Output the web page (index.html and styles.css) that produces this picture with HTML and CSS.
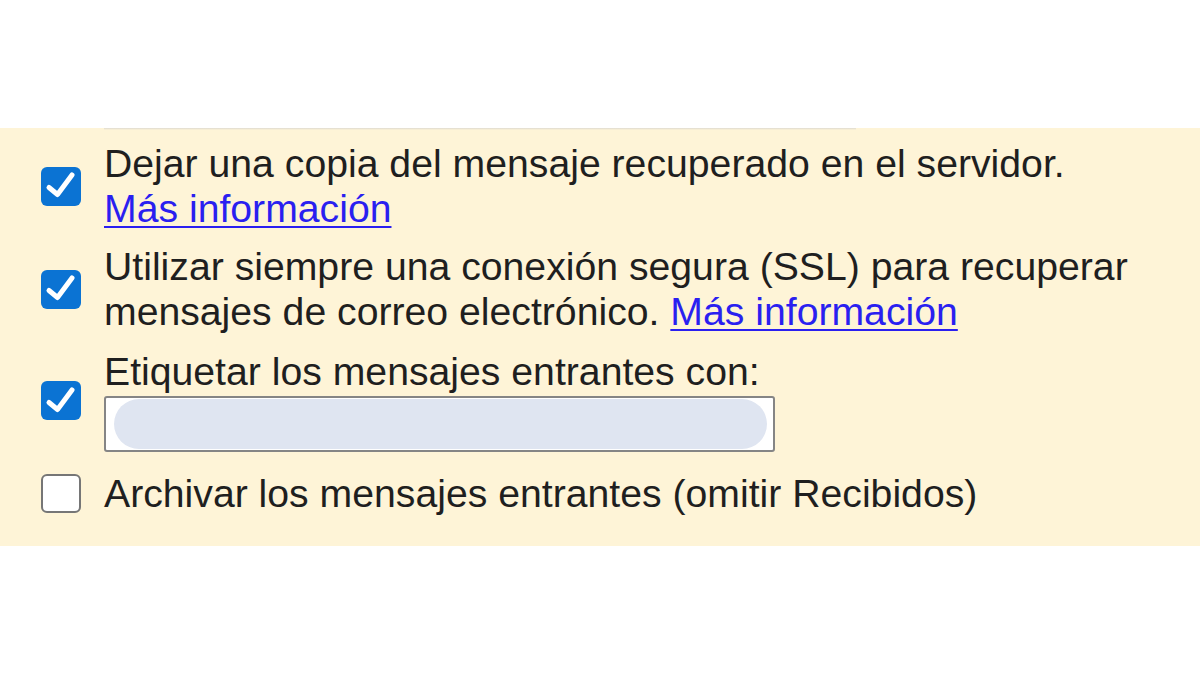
FILE: index.html
```html
<!DOCTYPE html>
<html lang="es">
<head>
<meta charset="utf-8">
<title>Opciones</title>
<link rel="stylesheet" href="styles.css">
</head>
<body>
<div class="page">
  <section class="band">
    <div class="edge"></div>
    <div class="row row-first">
      <span class="cb checked"><svg viewBox="0 0 40 40" width="40" height="40"><path d="M8 21.5 L16.5 28.5 L31 9" fill="none" stroke="#fff" stroke-width="5" stroke-linecap="round" stroke-linejoin="round"/></svg></span>
      <div class="label">Dejar una copia del mensaje recuperado en el servidor.<br><a href="#">Más información</a></div>
    </div>
    <div class="row row-second">
      <span class="cb checked"><svg viewBox="0 0 40 40" width="40" height="40"><path d="M8 21.5 L16.5 28.5 L31 9" fill="none" stroke="#fff" stroke-width="5" stroke-linecap="round" stroke-linejoin="round"/></svg></span>
      <div class="label">Utilizar siempre una conexión segura (SSL) para recuperar<br>mensajes de correo electrónico. <a href="#">Más información</a></div>
    </div>
    <div class="row row-third">
      <span class="cb checked"><svg viewBox="0 0 40 40" width="40" height="40"><path d="M8 21.5 L16.5 28.5 L31 9" fill="none" stroke="#fff" stroke-width="5" stroke-linecap="round" stroke-linejoin="round"/></svg></span>
      <div class="label">Etiquetar los mensajes entrantes con:
        <div class="field"><div class="pill"></div></div>
      </div>
    </div>
    <div class="row row-fourth">
      <span class="cb"></span>
      <div class="label">Archivar los mensajes entrantes (omitir Recibidos)</div>
    </div>
  </section>
</div>
</body>
</html>
```

FILE: styles.css
```css
html, body {
  margin: 0;
  padding: 0;
  background: #ffffff;
}
.page {
  width: 1200px;
  height: 675px;
  padding-top: 128px;
  box-sizing: border-box;
}
.band {
  position: relative;
  background: #fef4d7;
  padding: 13px 0 30px 41px;
  font-family: "Liberation Sans", Arial, sans-serif;
  font-size: 39.2px;
  line-height: 45px;
  color: #1f1f1f;
}
.edge {
  position: absolute;
  top: 0;
  left: 104px;
  width: 752px;
  height: 2px;
  background: linear-gradient(to bottom, #dedad0, rgba(222,218,208,0));
}
.row {
  display: flex;
  align-items: center;
  gap: 23px;
}
.row-second { margin-top: 13px; }
.row-third { margin-top: 15px; }
.row-fourth { margin-top: 19px; }
.cb {
  flex: none;
  width: 40px;
  height: 39px;
  border-radius: 6px;
  box-sizing: border-box;
  background: #ffffff;
  border: 2px solid #767676;
  display: flex;
  align-items: center;
  justify-content: center;
}
.cb.checked {
  background: #0b73d3;
  border: none;
}
.cb svg { display: block; }
.label a {
  color: #2a1ff0;
  text-decoration: underline;
  text-decoration-thickness: 2px;
  text-underline-offset: 4px;
}
.field {
  margin-top: 2px;
  width: 671px;
  height: 56px;
  box-sizing: border-box;
  border: 2px solid #858585;
  border-radius: 3px;
  background: #ffffff;
  padding: 1px 6px 1px 8px;
}
.pill {
  height: 100%;
  border-radius: 27px;
  background: #dfe5f1;
}
```
